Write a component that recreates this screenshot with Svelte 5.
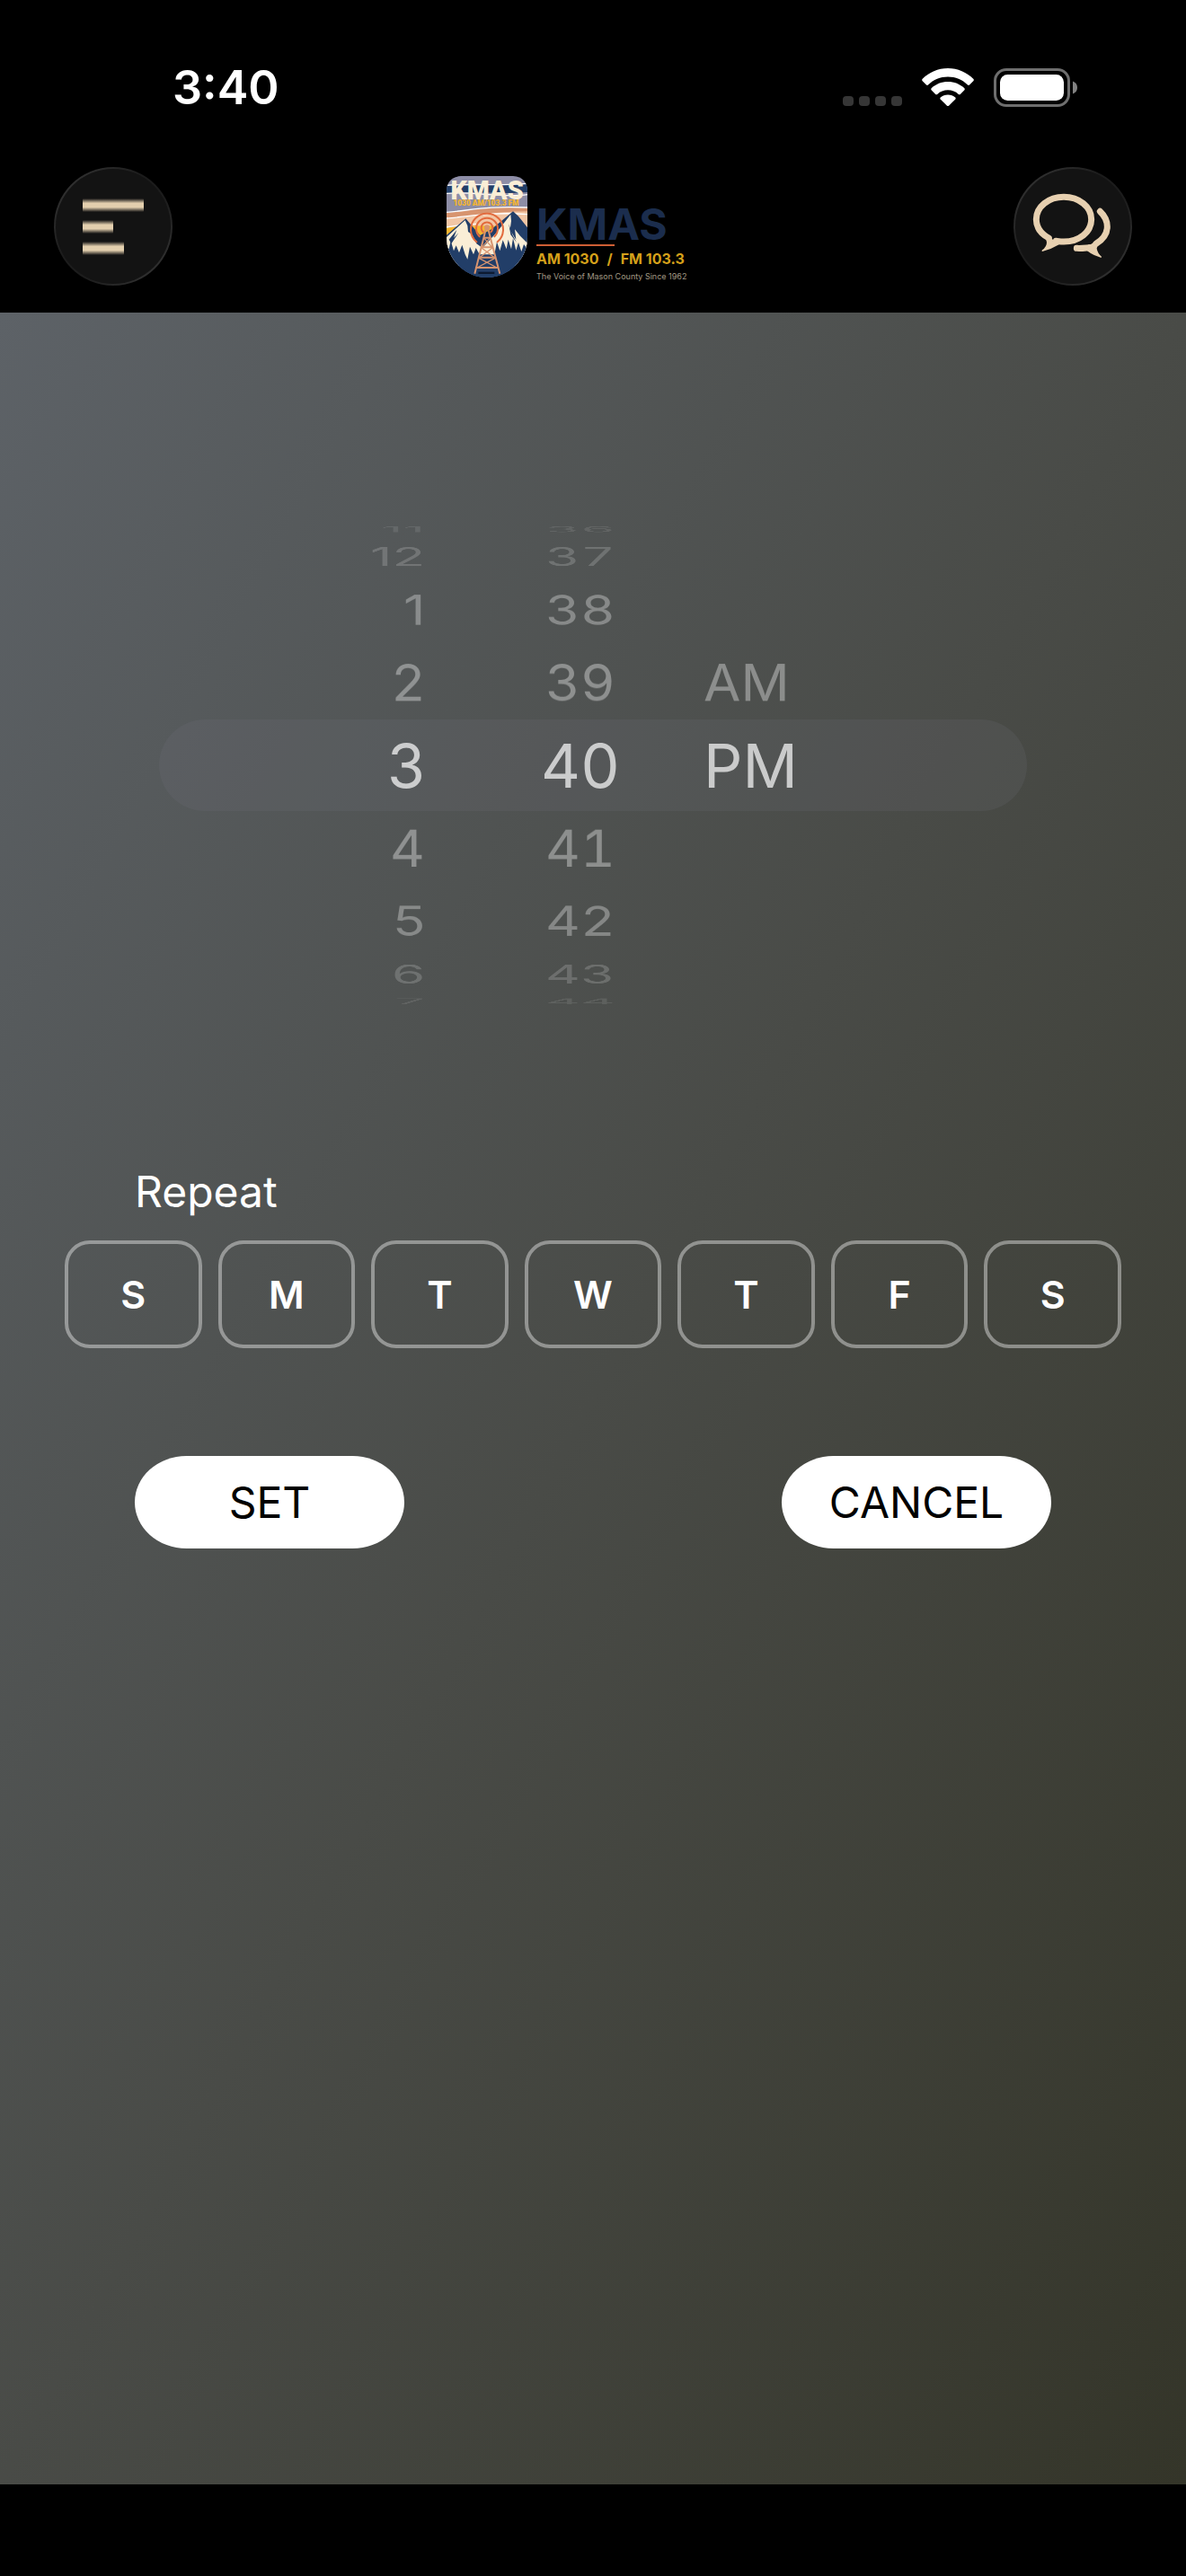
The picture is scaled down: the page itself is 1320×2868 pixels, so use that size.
<script lang="ts">
  const wheels = [
    {
      name: 'Hour',
      kind: 'hour',
      rows: ['11', '12', '1', '2', '3', '4', '5', '6', '7'],
      first: -4
    },
    {
      name: 'Minute',
      kind: 'minute',
      rows: ['36', '37', '38', '39', '40', '41', '42', '43', '44'],
      first: -4
    },
    { name: 'Period', kind: 'period', rows: ['AM', 'PM'], first: -1 }
  ];

  let days = $state([
    { letter: 'S', name: 'Sunday', on: false },
    { letter: 'M', name: 'Monday', on: false },
    { letter: 'T', name: 'Tuesday', on: false },
    { letter: 'W', name: 'Wednesday', on: false },
    { letter: 'T', name: 'Thursday', on: false },
    { letter: 'F', name: 'Friday', on: false },
    { letter: 'S', name: 'Saturday', on: false }
  ]);
</script>

<div class="screen">
  <div class="status">
    <time class="clock">3:40</time>
    <svg class="indicators" viewBox="0 0 262 44" aria-hidden="true">
      <g fill="#363636">
        <rect x="0" y="31" width="12" height="11" rx="4" />
        <rect x="18" y="31" width="12" height="11" rx="4" />
        <rect x="36" y="31" width="12" height="11" rx="4" />
        <rect x="54" y="31" width="12" height="11" rx="4" />
      </g>
      <g fill="#fff">
        <path d="M117 0C128 0 138 4.500 145.500 12Q146.300 13 145.500 14L141 18.500Q140 19.300 139 18.500C133 12.500 125.500 9.500 117 9.500S101 12.500 95 18.500Q94 19.300 93 18.500L88.500 14Q87.700 13 88.500 12C96 4.500 106 0 117 0Z" />
        <path d="M117 15C124 15 130.500 17.500 135.400 22.300Q136.300 23.300 135.400 24.300L130.800 28.900Q129.800 29.700 128.800 28.900C125.500 25.800 121.500 24.300 117 24.300S108.500 25.800 105.200 28.900Q104.200 29.700 103.200 28.900L98.600 24.300Q97.700 23.300 98.600 22.300C103.500 17.500 110 15 117 15Z" />
        <path d="M117 29.500C120.200 29.500 123 30.500 125.300 32.500Q126.200 33.500 125.300 34.400L118 41.700Q117 42.500 116 41.700L108.700 34.400Q107.800 33.500 108.700 32.500C111 30.500 113.800 29.500 117 29.500Z" />
      </g>
      <rect x="169.500" y="1.500" width="82" height="40" rx="12.500" fill="none" stroke="#6e6e6e" stroke-width="3" />
      <rect x="175" y="7" width="71" height="29" rx="8.500" fill="#fff" />
      <path d="M256 14.500c3.500 1.200 5 4 5 7s-1.500 5.800-5 7z" fill="#828282" />
    </svg>
  </div>

  <header class="nav">
    <button class="round" type="button" aria-label="Menu">
      <svg viewBox="0 0 132 132" aria-hidden="true">
        <defs>
          <linearGradient id="bar" x1="0" y1="0" x2="0" y2="1">
            <stop offset="0" stop-color="#e3cfae" stop-opacity="0" />
            <stop offset=".35" stop-color="#e3cfae" />
            <stop offset=".65" stop-color="#e3cfae" />
            <stop offset="1" stop-color="#e3cfae" stop-opacity="0" />
          </linearGradient>
        </defs>
        <g fill="url(#bar)">
          <rect x="32" y="35" width="68" height="15" rx="1" />
          <rect x="32" y="59" width="34" height="15" rx="1" />
          <rect x="32" y="83" width="46" height="15" rx="1" />
        </g>
      </svg>
    </button>

    <div class="brand">
      <svg class="badge" viewBox="0 0 270 339" role="img" aria-label="KMAS badge">
        <defs>
          <clipPath id="shield">
            <path d="M48 0H222Q270 4 270 52V205C270 280 205 339 135 339S0 280 0 205V52Q0 4 48 0Z" />
          </clipPath>
        </defs>
        <g clip-path="url(#shield)">
          <rect width="270" height="339" fill="#8d8da6" />
          <path d="M0 32C90 26 180 34 270 26V54C180 62 90 50 0 58Z" fill="#223e68" />
          <path d="M0 31C90 25 180 33 270 25M0 58C90 50 180 74 270 62" fill="none" stroke="#fff" stroke-width="4" />
          <path d="M0 122C80 116 130 100 270 106V240H0Z" fill="#d7946f" />
          <path d="M0 142C70 138 130 120 270 118V240H0Z" fill="#f2c6a5" />
          <path d="M0 121C80 115 130 99 270 105M0 141C70 137 140 118 270 128" fill="none" stroke="#fff" stroke-width="4" />
          <path d="M0 172Q135 160 270 172V220H0Z" fill="#f5b52e" />
          <path d="M0 171Q60 160 100 160" fill="none" stroke="#fff" stroke-width="4" />
          <path d="M0 197L64 142L112 198L150 178L222 118L240 134L270 172V339H0Z" fill="#223e68" />
          <path d="M0 204L62 148L70 166L72 186L86 196L100 226L120 240L166 190L214 128L216 150L212 180L232 212L228 178L246 200L270 224V300H0Z" fill="#faeed6" />
          <path d="M8 212L34 180L24 206L40 190L16 226ZM208 160L220 196L234 222L214 196Z" fill="#223e68" />
          <path d="M0 234L8 244L14 216L24 250L32 232L42 256L52 230L62 262L70 278L78 236L90 262L98 240L110 262L160 262L168 220L178 250L188 214L200 244L206 212L216 244L222 208L232 248L240 222L250 252L258 228L270 244V339H0Z" fill="#223e68" />
          <g fill="none" stroke="#e26b3d" stroke-width="6" stroke-linecap="round">
            <path d="M122 187A19 19 0 1 1 148 187" />
            <path d="M110 202A36 36 0 1 1 160 202" />
            <path d="M100 220A54 54 0 1 1 170 220" />
          </g>
          <circle cx="135" cy="172" r="9" fill="#d7946f" />
          <g fill="none" stroke="#d7946f" stroke-width="6">
            <path d="M132 174L94 326M138 174L178 326M122 206H147M116 238H154M106 272H164M96 306H174" />
            <path d="M124 206L152 238M146 206L118 238M117 240L160 272M153 240L110 272M108 274L168 306M162 274L102 306" stroke-width="4" />
          </g>
          <rect x="106" y="320" width="54" height="7" fill="#0d1a30" />
        </g>
        <text x="135" y="78" class="badge-name">KMAS</text>
        <text x="132" y="99" class="badge-freq">1030 AM/103.3 FM</text>
      </svg>
      <div class="wordmark">
        <strong class="call">KMAS</strong>
        <span class="rule"></span>
        <span class="freq"><span>AM 1030</span><span>/</span><span>FM 103.3</span></span>
        <small class="tag">The Voice of Mason County Since 1962</small>
      </div>
    </div>

    <button class="round" type="button" aria-label="Chat">
      <svg viewBox="0 0 396 396" aria-hidden="true">
        <g fill="none" stroke="#e7d0b0" stroke-width="21" stroke-linecap="round" stroke-linejoin="round">
          <path d="M118 237C90 222 76 199 76 175C76 133 117 100 168 100S260 133 260 175S219 249 168 249C158 249 151 248 142 247" />
          <path d="M289 148C306 164 313 180 313 199C313 222 300 241 276 256" />
          <path d="M211 271C228 272 240 270 252 269" />
        </g>
        <g fill="#e7d0b0">
          <path d="M112 228L126 238Q136 244 131 249L134 244Q146 238 156 241L152 259Q124 276 96 282Q93 280 96 277Q111 266 111 251Q111 243 104 236Z" />
          <path d="M250 259Q259 259 264 254L278 244L286 258Q278 264 278 272Q281 288 294 299Q295 303 291 302Q267 296 246 280Z" />
        </g>
      </svg>
    </button>
  </header>

  <main>
    <div class="picker">
      {#each wheels as wheel}
        <div class="wheel {wheel.kind}" role="listbox" aria-label={wheel.name}>
          {#each wheel.rows as row, i}
            {@const step = wheel.first + i}
            <button
              type="button"
              role="option"
              aria-selected={step === 0}
              class="row depth-{Math.abs(step)}"
              style="--step: {step}">{row}</button>
          {/each}
        </div>
      {/each}
    </div>

    <h2 id="repeat">Repeat</h2>
    <div class="days" role="group" aria-labelledby="repeat">
      {#each days as day}
        <button
          type="button"
          class="day"
          class:on={day.on}
          aria-label={day.name}
          aria-pressed={day.on}
          onclick={() => (day.on = !day.on)}>{day.letter}</button>
      {/each}
    </div>

    <div class="actions">
      <button type="button" class="pill">SET</button>
      <button type="button" class="pill">CANCEL</button>
    </div>
  </main>
</div>

<style>
  :global(body) {
    margin: 0;
    background: #000;
  }

  .screen {
    display: flex;
    flex-direction: column;
    box-sizing: border-box;
    min-height: 100vh;
    padding-bottom: 102px;
    background: #000;
    color: #fff;
    font-family: Inter, 'Liberation Sans', sans-serif;
  }

  button {
    margin: 0;
    padding: 0;
    border: 0;
    background: none;
    color: inherit;
    font: inherit;
    cursor: pointer;
  }

  .status {
    display: flex;
    justify-content: space-between;
    align-items: center;
    height: 116px;
    padding: 40px 120px 0 192px;
  }

  .clock {
    font-size: 52px;
    font-weight: 600;
    line-height: 64px;
  }

  .indicators {
    width: 262px;
    height: 44px;
  }

  .nav {
    display: flex;
    justify-content: space-between;
    align-items: center;
    height: 192px;
    padding: 0 60px;
  }

  .round {
    box-sizing: border-box;
    width: 132px;
    height: 132px;
    border-radius: 50%;
    border: 2px solid transparent;
    background:
      linear-gradient(#131313, #131313) padding-box,
      linear-gradient(135deg, #3a3a3a, #1c1c1c 40%, #1c1c1c 60%, #3a3a3a) border-box;
  }

  .round svg {
    display: block;
    width: 132px;
    height: 132px;
    margin: -2px;
  }

  .brand {
    display: flex;
    align-items: center;
    gap: 10px;
    width: 326px;
  }

  .badge {
    width: 90px;
    height: 113px;
  }

  .badge-name {
    font: 900 86px Roboto, sans-serif;
    fill: #faeed6;
    text-anchor: middle;
  }

  .badge-freq {
    font: 900 25px Roboto, sans-serif;
    fill: #f5b52e;
    text-anchor: middle;
  }

  .wordmark {
    display: flex;
    flex-direction: column;
    align-items: flex-start;
    padding-top: 36px;
    white-space: nowrap;
  }

  .call {
    font-size: 48px;
    font-weight: 700;
    line-height: 44px;
    color: #1b2d4d;
  }

  .rule {
    width: 87px;
    height: 2px;
    background: #cf5f35;
  }

  .freq {
    display: flex;
    gap: 9px;
    font-size: 16px;
    font-weight: 700;
    line-height: 29px;
    color: #d5a01a;
  }

  .tag {
    font-size: 9px;
    line-height: 10px;
    color: #a39a85;
  }

  main {
    flex: 1;
    padding-top: 180px;
    background: linear-gradient(to bottom right, #5d6267, #494b47 50%, #343529);
  }

  .picker {
    position: relative;
    display: grid;
    grid-template-columns: 332px 274px 1fr;
    align-items: center;
    height: 648px;
    margin: 0 177px;
  }

  .picker::before {
    content: '';
    position: absolute;
    inset: 273px 0;
    border-radius: 51px;
    background: rgba(118, 118, 128, 0.16);
  }

  .wheel {
    display: grid;
    align-items: center;
  }

  .hour {
    justify-items: end;
    padding-right: 36px;
  }

  .minute {
    justify-items: center;
    font-variant-numeric: tabular-nums;
  }

  .period {
    justify-items: start;
  }

  .row {
    grid-area: 1 / 1;
    font-size: 60px;
    line-height: 72px;
    opacity: 0.36;
    transform: rotateX(calc(var(--step) * -20.3deg)) translateZ(266px);
  }

  .depth-0 {
    font-size: 68px;
    opacity: 0.7;
  }

  .depth-2 {
    opacity: 0.32;
  }

  .depth-3 {
    opacity: 0.18;
  }

  .depth-4 {
    opacity: 0.1;
  }

  h2 {
    margin: 121px 150px 24px;
    font-size: 48px;
    font-weight: 400;
    line-height: 60px;
  }

  .days {
    display: grid;
    grid-template-columns: repeat(7, 1fr);
    gap: 18px;
    padding: 0 72px;
  }

  .day {
    box-sizing: border-box;
    height: 120px;
    border: 4px solid rgba(255, 255, 255, 0.4);
    border-radius: 28px;
    font-size: 43px;
    font-weight: 600;
  }

  .day.on {
    background: rgba(255, 255, 255, 0.3);
  }

  .actions {
    display: flex;
    justify-content: space-between;
    padding: 120px 150px;
  }

  .pill {
    width: 300px;
    height: 103px;
    border-radius: 58px / 52px;
    background: #fff;
    color: #000;
    font-size: 48px;
  }
</style>
